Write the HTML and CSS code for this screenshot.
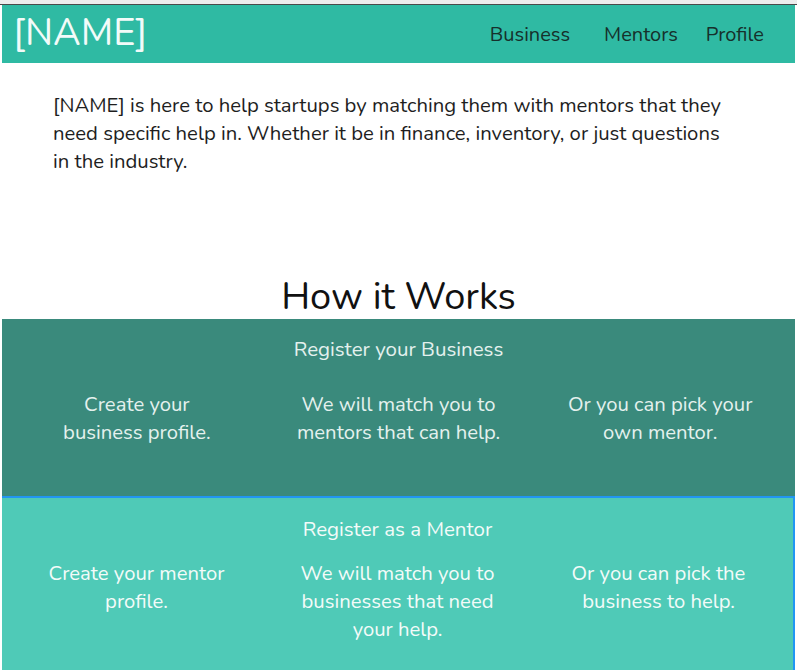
FILE: index.html
```html
<!DOCTYPE html>
<html lang="en">
<head>
<meta charset="utf-8">
<title>[NAME]</title>
<link rel="stylesheet" href="styles.css">
</head>
<body>
<div class="topbar"></div>
<header class="header">
  <div class="logo">[NAME]</div>
  <nav class="nav">
    <a class="nav-link nav-business" href="#">Business</a>
    <a class="nav-link nav-mentors" href="#">Mentors</a>
    <a class="nav-link" href="#">Profile</a>
  </nav>
</header>
<main>
  <p class="intro">[NAME] is here to help startups by matching them with mentors that they<br>need specific help in. Whether it be in finance, inventory, or just questions<br>in the industry.</p>
  <h1 class="how-title">How it Works</h1>
  <section class="band band-dark">
    <h2 class="band-title">Register your Business</h2>
    <div class="cols">
      <p class="col">Create your<br>business profile.</p>
      <p class="col">We will match you to<br>mentors that can help.</p>
      <p class="col">Or you can pick your<br>own mentor.</p>
    </div>
  </section>
  <section class="band band-light">
    <h2 class="band-title">Register as a Mentor</h2>
    <div class="cols">
      <p class="col">Create your mentor<br>profile.</p>
      <p class="col">We will match you to<br>businesses that need<br>your help.</p>
      <p class="col">Or you can pick the<br>business to help.</p>
    </div>
  </section>
</main>
</body>
</html>
```

FILE: styles.css
```css
* { box-sizing: border-box; }
html, body { margin: 0; padding: 0; background: #fff; }
body {
  font-family: "Nunito", "Lato", "Noto Sans", sans-serif;
  color: #1e1e1e;
  overflow: hidden;
}
.topbar {
  height: 5px;
  background: #ededed;
  border-bottom: 1px solid #4a4a4a;
}
.header {
  height: 58px;
  margin: 0 2px;
  background: #2fbaa3;
  display: flex;
  justify-content: space-between;
  align-items: flex-start;
}
.logo {
  font-size: 38px;
  line-height: 46px;
  color: #f2fbf9;
  padding: 5px 0 0 11px;
}
.nav {
  display: flex;
  padding: 17px 31px 0 0;
}
.nav-link {
  font-size: 20px;
  line-height: 26px;
  color: #16302b;
  text-decoration: none;
}
.nav-business { margin-right: 34px; }
.nav-mentors { margin-right: 28px; }
main { display: block; }
.intro {
  margin: 28px 0 0 53px;
  font-size: 20.3px;
  line-height: 28px;
  color: #1e1e1e;
}
.how-title {
  margin: 100px 0 0;
  text-align: center;
  font-weight: 400;
  font-size: 38px;
  line-height: 44px;
  color: #111;
}
.band {
  margin: 0 2px;
  padding: 0 4px;
}
.band-dark {
  background: #3a8a7c;
  height: 177px;
  padding-top: 16px;
  color: #e4f1ee;
}
.band-light {
  background: #4fcab7;
  height: 180px;
  padding-top: 17px;
  color: #f3fbf9;
  border-top: 2px solid #2196f3;
  border-right: 2px solid #2196f3;
}
.band-title {
  margin: 0;
  text-align: center;
  font-weight: 400;
  font-size: 20.5px;
  line-height: 28px;
}
.cols {
  display: grid;
  grid-template-columns: repeat(3, 1fr);
}
.band-dark .cols { margin-top: 27px; }
.band-light .cols { margin-top: 16px; }
.col {
  margin: 0;
  text-align: center;
  font-size: 20.3px;
  line-height: 28px;
}
```
